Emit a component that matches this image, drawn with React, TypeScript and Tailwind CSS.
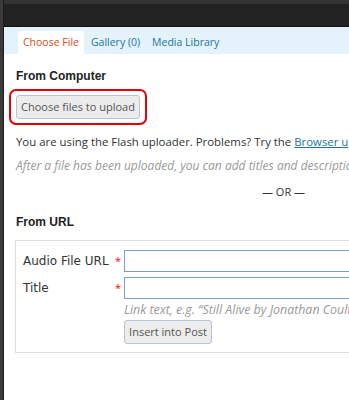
import React from 'react';

const body = { fontFamily: '"Open Sans", "Liberation Sans", sans-serif' };
const verdana = { fontFamily: '"DejaVu Sans", "Liberation Sans", sans-serif' };
const heading = { fontFamily: '"Liberation Sans", Arial, sans-serif' };

export default function App() {
  return (
    <div className="w-[349px] h-[400px] overflow-hidden bg-white flex" style={body}>
      {/* left frame edge */}
      <div className="w-[4px] shrink-0 bg-[#3a3a3a] border-r border-[#1a1a1a]"></div>

      <div className="flex-1 flex flex-col min-w-0">
        {/* top dark bar */}
        <div className="h-[27px] shrink-0 bg-[#222222] border-t-[4px] border-[#333333] border-b border-b-[#111111]"></div>

        {/* tabs */}
        <div className="h-[27px] shrink-0 bg-[#e4f2fc] flex items-end pl-[14px] gap-[1px] text-[10.5px] whitespace-nowrap">
          <div className="h-[23px] px-[5px] bg-white rounded-t-[3px] flex items-center text-[#d54e21]">Choose File</div>
          <div className="h-[23px] px-[6px] flex items-center text-[#21759b]">Gallery (0)</div>
          <div className="h-[23px] px-[5px] flex items-center text-[#21759b]">Media Library</div>
        </div>

        <div className="flex-1 pl-[12px] pt-[14px] whitespace-nowrap overflow-hidden">
          <h3 className="text-[12px] font-bold text-[#222] leading-[16px]" style={heading}>From Computer</h3>

          <div className="mt-[5px] ml-[-7px] w-[138px] h-[36px] border-2 border-[#e8000b] rounded-[7px] flex items-center justify-center">
            <button className="w-[124px] h-[24px] bg-[#ececec] border border-[#b6c5d1] rounded-[3px] text-[11px] text-[#555]">
              Choose files to upload
            </button>
          </div>

          <p className="mt-[9px] text-[11.4px] text-[#333] leading-[16px]">
            You are using the Flash uploader. Problems? Try the <span className="text-[#21759b] underline">Browser uploader</span> instead.
          </p>
          <p className="mt-[8px] text-[12px] italic text-[#999] leading-[16px]">
            After a file has been uploaded, you can add titles and descriptions.
          </p>
          <p className="mt-[10px] text-[11px] text-[#333] leading-[16px] pl-[246px]">— OR —</p>

          <h3 className="mt-[14px] text-[12px] font-bold text-[#222] leading-[16px]" style={heading}>From URL</h3>

          <div className="mt-[10px] ml-[-1px] h-[113px] border border-[#dfdfdf] border-r-0 pl-[7px] pt-[9px]">
            <div className="flex items-center h-[22px]">
              <span className="w-[92px] text-[12px] text-[#333]" style={verdana}>Audio File URL</span>
              <span className="w-[9px] text-[#f00] text-[11px]">*</span>
              <div className="flex-1 h-[22px] border border-[#7f9db9] border-r-0 bg-white"></div>
            </div>
            <div className="flex items-center h-[22px] mt-[5px]">
              <span className="w-[92px] text-[12px] text-[#333]" style={verdana}>Title</span>
              <span className="w-[9px] text-[#f00] text-[11px]">*</span>
              <div className="flex-1 h-[22px] border border-[#7f9db9] border-r-0 bg-white"></div>
            </div>
            <p className="ml-[101px] mt-[3px] text-[12.4px] italic text-[#999] leading-[16px]">
              Link text, e.g. &ldquo;Still Alive by Jonathan Coulton&rdquo;
            </p>
            <button className="ml-[101px] mt-[2px] w-[88px] h-[24px] bg-[#ececec] border border-[#b6c5d1] rounded-[3px] text-[11px] text-[#555]">
              Insert into Post
            </button>
          </div>
        </div>
      </div>
    </div>
  );
}
